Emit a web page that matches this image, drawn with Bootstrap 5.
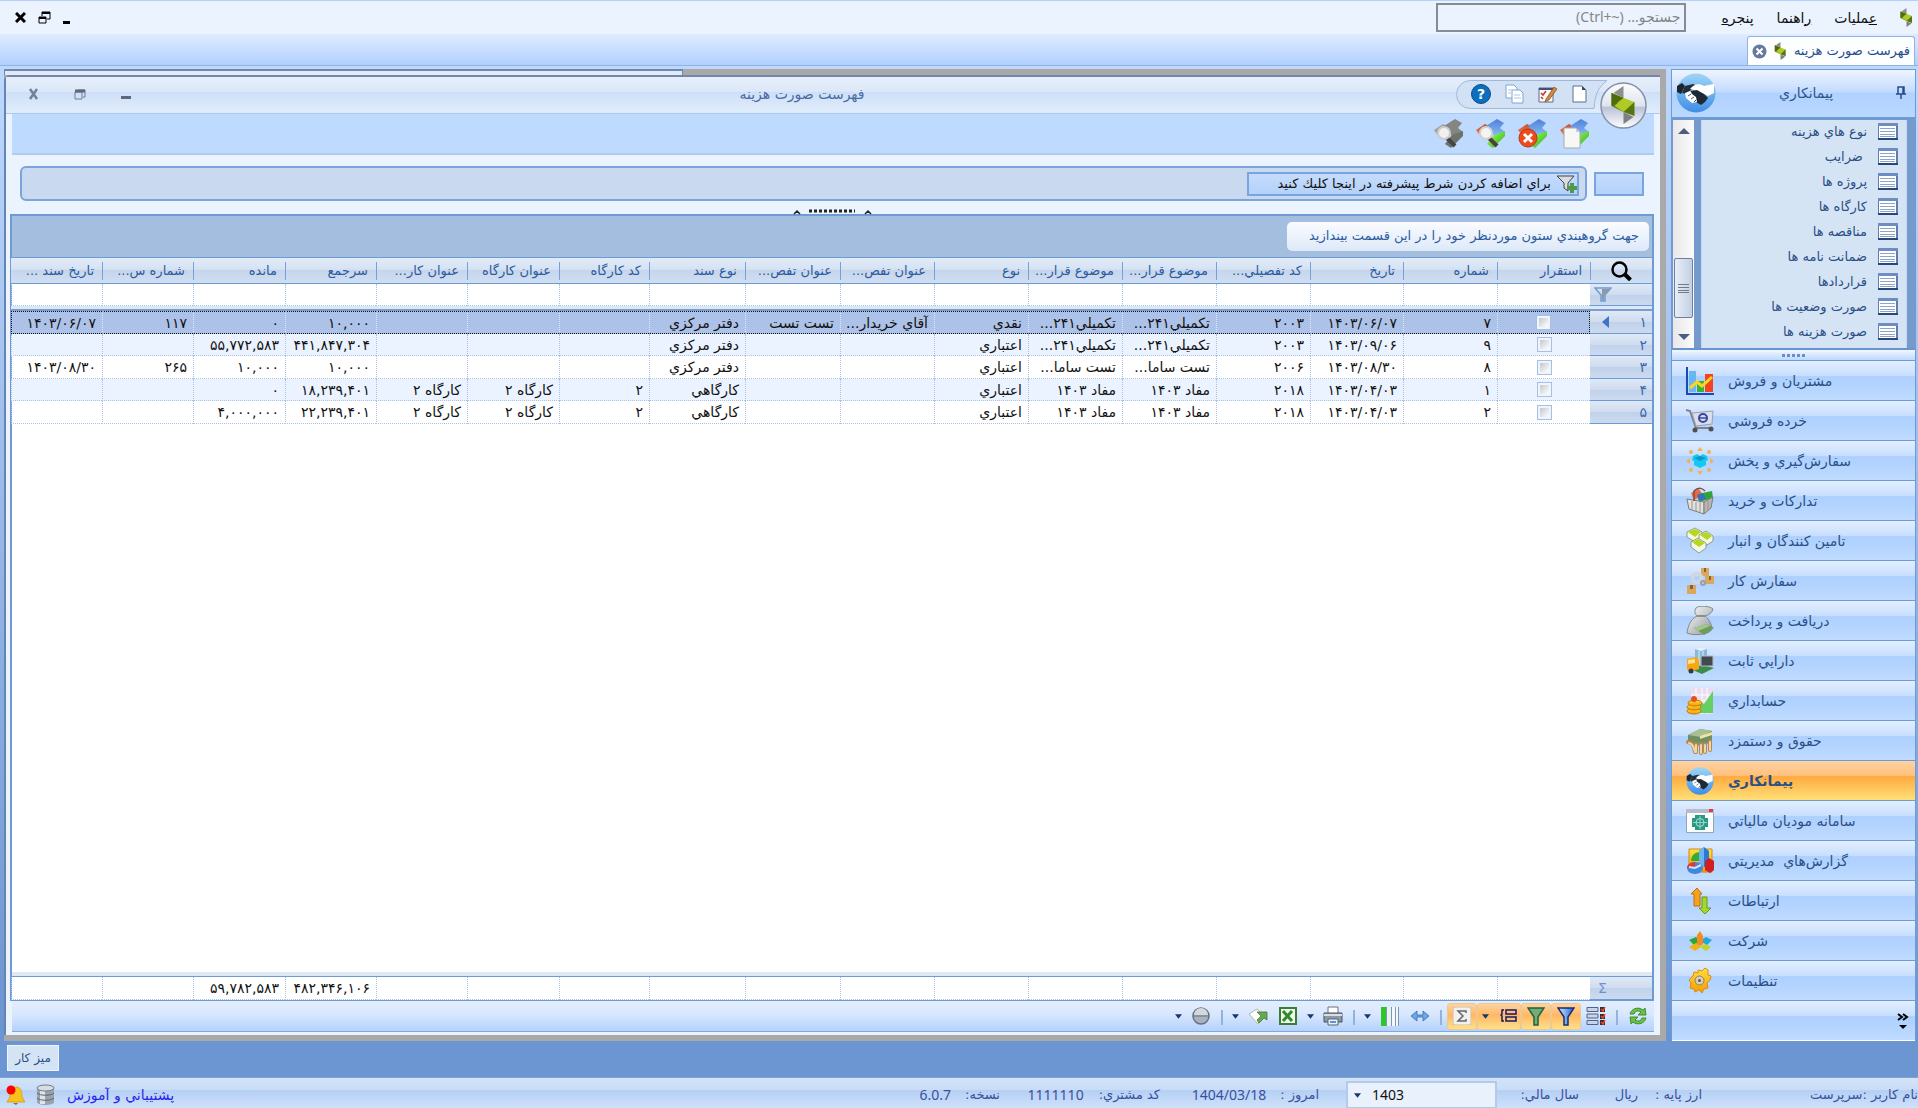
<!DOCTYPE html>
<html lang="fa" dir="rtl">
<head>
<meta charset="utf-8">
<meta name="viewport" content="width=device-width, initial-scale=1">
<title>فهرست صورت هزينه</title>
<link href="https://cdn.jsdelivr.net/npm/bootstrap@5.3.0/dist/css/bootstrap.min.css" rel="stylesheet">
<style>
:root{--line:#6f9bd5;--ink:#2b5596;--soft:#ebf3ff}
html,body{height:100%}
body{font-family:"DejaVu Sans","Noto Sans",sans-serif;font-size:13px;line-height:18px;color:var(--ink);background:linear-gradient(#bfd8fd 60px,#6b95d0 1040px);overflow:hidden}
button{font:inherit;color:inherit;background:none;border:0;padding:0}
svg{display:block;flex:none}
.menubar{height:34px;background:var(--soft);border-top:1px solid #b4d0fb;color:#111;padding:0 2px 0 15px}
.menubar a{color:#111;text-decoration:none;font-size:14px}
.menus{gap:23px;padding-right:3px}
.find-box{width:250px;height:29px;border:2px solid #868b94;background:var(--soft);border-radius:0;padding:0 4px 3px;font-size:14px;color:#777;font-family:"Noto Sans","DejaVu Sans",sans-serif;margin-right:12px}
.find-box::placeholder{color:#868686;opacity:1}
.winctl{gap:12px}
.tabstrip{height:32px;background:linear-gradient(#dfecff,#b1d0ff);border-bottom:1px solid #93b2de;padding:2px 3px 0}
.doc-tab{background:#fdfeff;border:1px solid #93b2de;border-bottom:0;border-radius:3px 3px 0 0;padding:0 4px;height:29px;color:#274c8c;width:168px}
.workspace{padding:3px 2px 0 4px;gap:5px;min-height:0}
.frame{background:#a9a9a9;padding:0 6px 6px 0;min-width:0;min-height:0}
.back-win{height:6px;width:41%;background:#e2e9f7;border-top:2px solid #6e88b4;border-left:1px solid #6e88b4;border-right:1px solid #6e88b4}
.mdi{background:var(--soft);border-left:2px solid #6584b3;border-top:2px solid #7186aa;border-radius:6px 0 0 0;min-height:0;position:relative}
.titlebar{height:37px;background:linear-gradient(#e6eefa 0,#dce8f8 40%,#cddff7 42%,#e1edfc 100%);border-bottom:1px solid #a9c8f3;padding:0 52px 2px 0;font-size:14px;color:#4a6ba3}
.quick{width:152px;height:29px;gap:14px;padding:0 20px 0 0;position:relative}
.quick button{position:relative}
.quick-shape{position:absolute;left:0;top:0}
.caption-ctl{gap:34px;width:142px;padding-left:22px;justify-content:flex-end}
.orb{position:absolute;right:13px;top:5px;z-index:2}
.actions{height:41px;background:#bedaff;border-bottom:2px solid #afcbf0;margin:0 6px;padding-right:64px;gap:12px}
.criteria{padding:11px 16px 0 14px;height:59px;gap:7px}
.crit-blank{width:50px;height:24px;border:2px solid #7aa4de;background:linear-gradient(#c5dcfd,#b4d2fb);margin-top:6px}
.crit-bar{height:35px;border:2px solid #7ba4db;border-radius:6px;background:#c9d9ef;padding-right:6px;min-width:0}
.crit-add{height:24px;width:332px;border:2px solid #7aa4de;background:linear-gradient(#c5dcfd,#b4d2fb);color:#111;gap:6px;padding:0}
.gridbox{margin:0 6px 0 4px;border:2px solid var(--line);border-bottom:0;background:#fff;min-height:0;position:relative}
.grip{position:absolute;top:-8px;left:50%;margin-left:-40px}
.groupby{height:41px;background:#a4bedf;padding:6px 3px 0}
.hint{height:29px;width:362px;background:linear-gradient(#fafcff,#dde9f8);border-radius:5px;padding:5px 10px 0;color:#2d5b9f}
.sheet{width:100%;table-layout:fixed;border-collapse:separate;border-spacing:0;color:#111;font-size:14px}
.sheet th,.sheet td{padding:0 6px 0 2px;white-space:nowrap;overflow:hidden;font-weight:400;text-align:right;line-height:18px}
.sheet thead th{height:27px;border-top:1px solid var(--line);border-bottom:1px solid var(--line);color:#2d5b9f;font-size:13px;padding-right:8px;background:linear-gradient(#78a0dc,#78a0dc) left center/1px 18px no-repeat,linear-gradient(#e2ebf8 0,#d6e2f3 45%,#c5d6ec 50%,#d0def2 100%)}
.sheet thead th:last-child{background:linear-gradient(#e2ebf8 0,#d6e2f3 45%,#c5d6ec 50%,#d0def2 100%)}
.sheet td{border-left:1px dotted #a9c2e6;border-bottom:1px dotted #a9c2e6;height:22px}
.sheet tr.tall td,.sheet tr.tall th{height:23px}
.sheet tr.gap-row td{height:5px;border:0;border-bottom:2px solid #7a9ccf;background:#dde8f7;padding:0;line-height:1px}
.sheet .rowhead{background:linear-gradient(#dfe9f7 0,#cfdcef 50%,#c0d2ea 52%,#cbdaf0 100%);border-bottom:1px solid var(--line);color:#3a68ad;padding:0 5px 0 4px}
.sheet .sum-mark{text-align:left;color:#6f93c8;padding-left:8px}
.sheet tr.alt td{background:#eaf3ff}
.sheet tr.picked td{background:#adc2e8;border-bottom:1px dotted #111;border-top:1px dotted #111;border-left-color:#dfe8f7}
.sheet tr.picked td:nth-child(2){border-right:1px dotted #111}
.sheet tr.picked td:last-child{border-left:1px dotted #111}
.sheet .tick{padding:0}
.sheet .lens{padding:0 0 0 21px}
.tick input{appearance:none;width:15px;height:15px;border:1px solid #a6c0e5;background:linear-gradient(135deg,#c3c8cf,#fff) content-box,#f1f5fb;padding:2px;display:block;margin:0 auto}
.totals{border-top:1px solid var(--line);box-shadow:0 -4px 0 #dfe8f5;border-bottom:1px solid var(--line)}
.gridbar{height:31px;margin:0 6px 3px;background:linear-gradient(#e3eeff 0,#d8e7fe 45%,#b4d2fc 100%);border-bottom:1px solid #7fa8de;padding:0 1px 0 0}
.gridbar button{height:27px;display:flex;align-items:center;justify-content:center}
.t-btn{width:30px}.t-wide{width:44px;gap:11px}.t-drop{width:15px}
.t-on{background:linear-gradient(#ffd3a0,#ffb765 45%,#ffe08a);border:1px solid #efc98c;border-radius:3px}
.t-sep{width:12px}
.t-sep::before{content:"";display:block;width:2px;height:15px;margin:2px auto 0;background:#93b2dd}
.side{width:245px;border:1px solid var(--line);border-bottom:0;min-height:0;background:#fff;flex:none}
.side-head{height:50px;background:linear-gradient(#eef5ff,#c5dcff 45%,#b1d2ff 50%,#b9d8ff);padding:0 9px 2px 4px;font-size:14px;border-bottom:3px solid var(--line);color:#2f5590}
.side-list{height:230px;background:#769acb;padding:0 8px 0 1px;overflow:hidden;border-bottom:2px solid #6a94d0}
.links{background:#d5e4f4;border-left:1px solid #c0d8fa;border-right:1px solid #c0d8fa;margin-left:7px;padding:0;list-style:none;min-width:0}
.links a{display:flex;align-items:center;gap:11px;height:25px;padding-right:8px;color:#2b4f86;text-decoration:none}
.links li:first-child{margin-top:-1px}
.scroller{width:21px;background:linear-gradient(90deg,#e8e8ea,#fbfbfb)}
.thumb{width:19px;height:60px;border:1px solid #6c7ea9;border-radius:2px;background:linear-gradient(90deg,#e8eef7,#c3d0e2)}
.splitter{height:10px;background:linear-gradient(#f2f8ff,#bdd8ff);color:#5d88c9}
.mod{height:40px;width:100%;border-top:1px solid var(--line)!important;background:linear-gradient(#e2eeff 0,#c9dfff 37%,#add0ff 40%,#bfdbff 100%)!important;gap:14px;padding:0 14px;color:#2b4f86!important;font-size:14px;justify-content:flex-end}
.mod.sel{background:linear-gradient(#ffd3a2 0,#ffc07d 37%,#ffab3f 40%,#ffdf77 100%)!important;font-weight:700}
.mod.more{padding:0 6px;justify-content:flex-start}
.deskbar{height:36px;background:#6c96d1;padding:0 0 2px 7px}
.desk{width:52px;height:26px;background:#d5e4f4;border:1px solid #eef5ff;color:#2b4f86;font-size:12px}
.status{height:31px;background:linear-gradient(#d3e3f9 0,#c9ddf7 38%,#b5d0f4 42%,#cfe1fa 100%);border-top:1px solid #7ea2d4;padding-top:4px;color:#3a4f9f;white-space:nowrap}
.lat{font-family:"Noto Sans",sans-serif;font-size:14px;direction:ltr}
.s-user{width:216px}.s-cur{width:123px;gap:17px}.s-year{width:82px}.s-day{width:186px;padding-right:27px;gap:14px}.s-cust{width:160px;gap:15px}.s-ver{gap:14px}
.year-pick{width:151px;height:28px;direction:ltr;border:2px solid #b4cae9;background:#e9f1fd;border-radius:0;padding:0 0 0 24px;appearance:none;color:#111;font-family:"Noto Sans",sans-serif;font-size:14px}
.year-wrap{position:relative}
.year-wrap svg{position:absolute;left:8px;top:12px;pointer-events:none}
.help-link{color:#2a1ff0;text-decoration:none;font-size:14px}
.trays{gap:11px;padding:0 12px 0 6px}
</style>
<script src="https://cdn.jsdelivr.net/npm/bootstrap@5.3.0/dist/js/bootstrap.bundle.min.js"></script>
</head>
<body class="d-flex flex-column">
<svg width="0" height="0" class="position-absolute" aria-hidden="true"><defs>
<linearGradient id="gOrb" x1="0" y1="0" x2="0" y2="1"><stop offset="0" stop-color="#fdfdff"/><stop offset=".5" stop-color="#dfe4ee"/><stop offset=".55" stop-color="#b9c3d8"/><stop offset="1" stop-color="#fff"/></linearGradient>
<linearGradient id="gBall" x1="0" y1="0" x2="0" y2="1"><stop offset="0" stop-color="#9fd6f6"/><stop offset="1" stop-color="#3f8de6"/></linearGradient>
<linearGradient id="gStone" x1="0" y1="0" x2="1" y2="1"><stop offset="0" stop-color="#fff"/><stop offset="1" stop-color="#8f9499"/></linearGradient>
<linearGradient id="gBlue" x1="0" y1="0" x2="1" y2="0"><stop offset="0" stop-color="#d8ecff"/><stop offset="1" stop-color="#1e63d8"/></linearGradient>
<linearGradient id="gGold" x1="0" y1="0" x2="0" y2="1"><stop offset="0" stop-color="#ffe23e"/><stop offset="1" stop-color="#f59a00"/></linearGradient>
<linearGradient id="gLime" x1="0" y1="0" x2="1" y2="1"><stop offset="0" stop-color="#b8ff5a"/><stop offset="1" stop-color="#1eb01e"/></linearGradient>
<linearGradient id="gSky" x1="0" y1="0" x2="0" y2="1"><stop offset="0" stop-color="#4f7fd8"/><stop offset="1" stop-color="#86bdf6"/></linearGradient>
<linearGradient id="gRed" x1="0" y1="0" x2="0" y2="1"><stop offset="0" stop-color="#c9502f"/><stop offset="1" stop-color="#f59470"/></linearGradient>
<symbol id="logo" viewBox="0 0 24 38"><path d="M12 0v12L2 7z" fill="#8d8f8c"/><path d="M0 7v13l12 6V12z" fill="#5b7a0f"/><path d="M0 7l23 10-11 9z" fill="#86a81c"/><path d="M0 7v13l12-8z" fill="#4f6c0d"/><path d="M12 12l11 4-11 10-9-6z" fill="#aecb28"/><path d="M23 16v14l-11-4z" fill="#57750f"/><path d="M12 26l10 5-10 7z" fill="#7f8180"/></symbol>
<symbol id="form" viewBox="0 0 20 18"><path d="M0 0h20v17H0z" fill="#5f7cae"/><path d="M1 3h17v12H1z" fill="#fff"/><path d="M0 0h20v3H0z" fill="#6f8cc4"/><path d="M2 5.500h15M2 8.500h15M2 11.500h15M2 13.500h15" stroke="#8ea5cb"/><path d="M0 16h20" stroke="#28487c" stroke-width="2"/></symbol>
<symbol id="hands" viewBox="0 0 40 40"><circle cx="20" cy="20" r="19.500" fill="url(#gBall)"/><path d="M1 13l5-3 3 3-4 8-4-2z" fill="#1e252e"/><path d="M9 13l8-2 4 2-6 4-4 4-5-1z" fill="#262e38"/><path d="M14 16c4-5 9-6 14-3l4-1 6-1v9l-6 3-4-2-10-4z" fill="#fff"/><path d="M15 18l6-1 7 4 4 4-3 4-4 3-5-3-4-5z" fill="#1f2833"/><path d="M9 20l5-2 2 3 4 3 1 5-5 1-6-5z" fill="#fff"/><path d="M12 23l3-2M15 26l3-2M18 29l2-2" stroke="#4a5a70"/></symbol>
<symbol id="gem" viewBox="0 0 30 30"><path d="M0 11l9-6 8 4-4 12-8-3z" fill="url(#gRed)"/><path d="M10 7l11-7 7 4-4 5 5 4-11 4z" fill="url(#gSky)"/><path d="M29 12v5L17 29l-6-4 7-9z" fill="url(#gLime)"/></symbol>
<symbol id="gemg" viewBox="0 0 30 30"><path d="M0 11l9-6 8 4-4 12-8-3z" fill="#a2a29f"/><path d="M10 7l11-7 7 4-4 5 5 4-11 4z" fill="#858583"/><path d="M29 12v5L17 29l-6-4 7-9z" fill="#6e726a"/></symbol>
<symbol id="drop" viewBox="0 0 8 5"><path d="M0 0h8L4 5z" fill="#17386f"/></symbol>
</defs></svg>

<header class="menubar d-flex align-items-center justify-content-between">
 <div class="d-flex align-items-center menus">
  <svg width="13" height="19"><use href="#logo"/></svg>
  <a href="#"><u>ع</u>مليات</a><a href="#"><u>ر</u>اهنما</a><a href="#">پنجر<u>ه</u></a>
  <input class="find-box" type="text" aria-label="جستجو" placeholder="جستجو... &lrm;(Ctrl+~)&lrm;">
 </div>
 <div class="d-flex align-items-center winctl">
  <button aria-label="کوچک کردن"><svg width="8" height="12"><path d="M0 9h7v3H0z"/></svg></button>
  <button aria-label="بازگرداندن"><svg width="13" height="13" fill="none" stroke="#000"><path d="M4 5V1h8v7H9M1 6h7v6H1z"/><path d="M4 2h8M1 7h7" stroke-width="2"/></svg></button>
  <button aria-label="بستن"><svg width="11" height="11" stroke="#000" stroke-width="3"><path d="M1 1l9 9M10 1l-9 9"/></svg></button>
 </div>
</header>
<div class="tabstrip d-flex">
 <div class="doc-tab d-flex align-items-center justify-content-between"><span>فهرست صورت هزينه</span>
  <svg width="13" height="18"><use href="#logo"/></svg>
  <button aria-label="بستن زبانه"><svg width="15" height="15"><circle cx="7.500" cy="7.500" r="7" fill="#66799e"/><path d="M4.500 4.500l6 6M10.500 4.500l-6 6" stroke="#fff" stroke-width="2"/></svg></button>
 </div>
</div>

<main class="workspace d-flex flex-fill">
 <aside class="side d-flex flex-column">
  <div class="side-head d-flex align-items-center justify-content-between">
   <svg width="10" height="13" fill="none" stroke="#274c8c" stroke-width="1.500"><path d="M2 8V1h6v7M0 8h10M5 8v5M7 1v7"/></svg><span>پيمانكاري</span><svg width="40" height="40"><use href="#hands"/></svg>
  </div>
  <div class="side-list d-flex">
   <ul class="links flex-fill mb-0">
    <li><a href="#"><svg width="20" height="18"><use href="#form"/></svg>نوع هاي هزينه</a></li>
    <li><a href="#"><svg width="20" height="18"><use href="#form"/></svg>&nbsp;ضرايب</a></li>
    <li><a href="#"><svg width="20" height="18"><use href="#form"/></svg>پروژه ها</a></li>
    <li><a href="#"><svg width="20" height="18"><use href="#form"/></svg>كارگاه ها</a></li>
    <li><a href="#"><svg width="20" height="18"><use href="#form"/></svg>مناقصه ها</a></li>
    <li><a href="#"><svg width="20" height="18"><use href="#form"/></svg>ضمانت نامه ها</a></li>
    <li><a href="#"><svg width="20" height="18"><use href="#form"/></svg>قراردادها</a></li>
    <li><a href="#"><svg width="20" height="18"><use href="#form"/></svg>صورت وضعيت ها</a></li>
    <li><a href="#"><svg width="20" height="18"><use href="#form"/></svg>صورت هزينه ها</a></li>
    <li><a href="#" aria-label="مورد بعدي"><svg width="20" height="18"><use href="#form"/></svg></a></li>
   </ul>
   <div class="scroller d-flex flex-column align-items-center justify-content-between pt-2 pb-2">
    <svg width="12" height="6"><path d="M0 6h12L6 0z" fill="#4d5c80"/></svg>
    <div class="d-flex flex-column align-items-center gap-3 mt-auto"><div class="thumb d-flex align-items-center justify-content-center"><svg width="11" height="9" stroke="#737a84"><path d="M0 .5h11M0 3.500h11M0 6.500h11M0 8.500h11"/></svg></div>
    <svg width="12" height="6"><path d="M0 0h12L6 6z" fill="#4d5c80"/></svg></div>
   </div>
  </div>
  <div class="splitter d-flex align-items-center justify-content-center"><svg width="24" height="3" fill="#6a8fc8"><path d="M0 0h3v3H0zM5 0h3v3H5zM10 0h3v3h-3zM15 0h3v3h-3zM20 0h3v3h-3z"/></svg></div>

  <button class="mod d-flex align-items-center"><span>مشتريان و فروش</span><svg width="28" height="28"><path d="M3 4h7v21H3z" fill="#69b6f5"/><path d="M11 14h7v11h-7z" fill="#35b43a"/><path d="M19 7h8v18h-8z" fill="#f2451f"/><path d="M1 0v27h27" fill="none" stroke="#1b48b4" stroke-width="2"/><path d="M4 21l7-6 5 4 10-9" fill="none" stroke="#ffd420" stroke-width="3"/></svg></button>
  <button class="mod d-flex align-items-center"><span>خرده فروشي</span><svg width="28" height="28"><path d="M0 3l4 1 6 17h16" fill="none" stroke="#7e828c" stroke-width="2"/><path d="M6 6l21-2-1 13-16 2z" fill="#d9dee9" stroke="#9aa0ae"/><circle cx="17" cy="11" r="4" fill="none" stroke="#3748a4" stroke-width="2"/><path d="M14 11h6" stroke="#3748a4" stroke-width="1.500"/><circle cx="9" cy="23" r="2.500" fill="#554f4c"/><circle cx="25" cy="22" r="2.500" fill="#554f4c"/></svg></button>
  <button class="mod d-flex align-items-center"><span>سفارش‌گيري و پخش</span><svg width="28" height="28"><path d="M7 9l4-2 3 2 3-2 4 2 1 4-2 1v4l-6 3-6-3v-4l-2-1z" fill="#13c9ee"/><path d="M8 11l6 3 6-3-6-2z" fill="#0c95d0"/><g fill="#efb457"><path d="M14 0l3 4h-6zM14 28l3-4h-6zM0 14l4-3v6zM28 14l-4-3v6z"/><circle cx="5" cy="5" r="2"/><circle cx="23" cy="5" r="2"/><circle cx="5" cy="23" r="2"/><circle cx="23" cy="23" r="2"/></g></svg></button>
  <button class="mod d-flex align-items-center"><span>تداركات و خريد</span><svg width="28" height="28"><path d="M5 6l8-4 4 6-9 5z" fill="#e36b45"/><path d="M12 7l14-3 1 7-14 4z" fill="#2fa33c"/><path d="M11 8l6-2 3 6-7 2z" fill="#3b6fb8"/><path d="M1 12l17 3v12L3 22z" fill="#e1e1de" stroke="#7f7c76"/><path d="M18 15l9-5-2 11-7 6z" fill="#b9b6b1" stroke="#7f7c76"/><path d="M6 14v8M10 15v9M14 15v10M22 14v9" stroke="#98958e"/><path d="M8 14V4c5-5 9-2 11 0" fill="none" stroke="#8b4a3f" stroke-width="1.500"/></svg></button>
  <button class="mod d-flex align-items-center"><span>تامين كنندگان و انبار</span><svg width="28" height="28"><g stroke="#7f8b66" stroke-width=".8"><path d="M1 5l8-4 7 4v5l-7 5-8-5z" fill="#f4f7e8"/><path d="M13 8l7-4 7 5v5l-6 4-8-5z" fill="#f4f7e8"/><path d="M5 15l7-4 8 5v5l-7 5-8-6z" fill="#f4f7e8"/></g><path d="M2 5l7-3 6 3-6 5zM14 8l6-3 6 4-5 4zM6 15l6-3 7 4-6 4z" fill="#b6d81c"/></svg></button>
  <button class="mod d-flex align-items-center"><span>سفارش كار</span><svg width="28" height="28"><path d="M15 1h8v8h-8zM19 9h9v8h-9zM1 18h9v9H1z" fill="#dba75c"/><path d="M18 1h2v4h-2zM23 9h2v4h-2zM4 18h3v4H4z" fill="#8b6236"/><circle cx="11" cy="11" r="4.500" fill="none" stroke="#d3d6da" stroke-width="3.500"/><circle cx="17" cy="16" r="2" fill="none" stroke="#9aa0a8" stroke-width="2"/></svg></button>
  <button class="mod d-flex align-items-center"><span>دريافت و پرداخت</span><svg width="28" height="30"><path d="M10 2c3-3 14-2 17 1-1 4-4 6-8 7 4 3 7 9 7 13-2 6-19 7-25 4 1-7 3-13 10-17-2-2-3-5-1-8z" fill="url(#gStone)" stroke="#85888c"/><path d="M11 10h8" stroke="#777" stroke-width="1.500"/><path d="M8 22l13-4 7 4-10 7z" fill="#6f9c56"/><path d="M8 22l13-4 3 2-12 5z" fill="#a3c48d"/></svg></button>
  <button class="mod d-flex align-items-center"><span>دارايي ثابت</span><svg width="28" height="28"><path d="M2 21l12-4 14 4-12 6z" fill="#3c8b4a"/><path d="M9 2h12v17H9z" fill="#88b9d8"/><path d="M9 2l6-1 6 1-6 2z" fill="#e6f3fb"/><path d="M13 4v14M17 4v14" stroke="#dceffa"/><path d="M15 9h12v10H15z" fill="#44494f" stroke="#b7bdc4"/><path d="M1 12l10-2 2 4v8L3 25l-2-3z" fill="#f5a716"/><path d="M2 13l7-1v4l-7 1z" fill="#ffe28a"/><circle cx="5" cy="24" r="2.500" fill="#3a3a3a"/></svg></button>
  <button class="mod d-flex align-items-center"><span>حسابداري</span><svg width="28" height="28"><path d="M5 1h22v26H5z" fill="#eaddf2"/><path d="M10 1v26M16 1v26M21 1v26M5 8h22M5 14h22" stroke="#fff"/><path d="M6 26l5-12 7 3 9-13v22z" fill="#66cf62"/><g fill="url(#gGold)" stroke="#c87a0a"><ellipse cx="8" cy="24" rx="7" ry="3"/><ellipse cx="8" cy="20" rx="7" ry="3"/><ellipse cx="9" cy="16" rx="7" ry="3"/></g><circle cx="8" cy="12" r="3" fill="#e8501e"/></svg></button>
  <button class="mod d-flex align-items-center"><span>حقوق و دستمزد</span><svg width="28" height="28"><path d="M2 8l12-6 12 2v11l-12 4L2 14z" fill="#6f8f62"/><path d="M2 8l12-6 12 2-11 6z" fill="#a9bf92"/><path d="M14 9l12-4v3l-12 4z" fill="#e9e6a8"/><path d="M2 15c5 1 6 4 7 10M10 17v8M15 17v9M19 17v8M24 14v9" stroke="#b58a52" stroke-width="4" fill="none" stroke-linecap="round"/><path d="M3 16c4 1 5 4 6 9M10 18v7M15 18v8M19 18v7M24 15v8" stroke="#f2d5a7" stroke-width="2" fill="none" stroke-linecap="round"/></svg></button>
  <button class="mod sel d-flex align-items-center"><span>پيمانكاري</span><svg width="28" height="28"><use href="#hands"/></svg></button>
  <button class="mod d-flex align-items-center"><span>سامانه موديان مالياتي</span><svg width="28" height="26"><path d="M.5 1.500h27v23H.5z" fill="#fcfdfd" stroke="#9aa3b2"/><path d="M0 1h28v4H0z" fill="#b7bdc8"/><path d="M23 1h4v3h-4z" fill="#d8423a"/><path d="M6 10h3V7h10v3h3v9h-3v3H9v-3H6z" fill="#2b9a85"/><circle cx="14" cy="14.500" r="4" fill="none" stroke="#a8e0d4"/><path d="M14 8v13M7 14.500h14" stroke="#a8e0d4" stroke-width=".8"/></svg></button>
  <button class="mod d-flex align-items-center"><span>گزارش‌هاي &nbsp;مديريتي</span><svg width="28" height="28"><path d="M3 2h23v23H3z" fill="url(#gGold)" stroke="#d08a12"/><path d="M5 14c0-6 5-9 9-9v9z" fill="#37a83a"/><path d="M13 4l5-4 5 4v16H13z" fill="#2b78dc"/><path d="M13 4l5-4v20h-5z" fill="#6cb2f4"/><path d="M19 14l4-3 5 3v9l-4 3-5-3z" fill="#cf1f23"/><ellipse cx="9" cy="21" rx="8" ry="6" fill="#3f86e0"/><path d="M9 21v-6c-5 0-8 3-8 6z" fill="#e13a33"/><path d="M3 20l6 1 6-3" stroke="#cfe4fb" fill="none" stroke-width="2"/></svg></button>
  <button class="mod d-flex align-items-center"><span>ارتباطات</span><svg width="28" height="28"><path d="M5 7l6-6 5 6h-2v12H8V7z" fill="#f3a21c" stroke="#bf6f0c"/><path d="M16 10h5v11h4l-6 6-6-6h3z" fill="#a5d62a" stroke="#6a9a14"/></svg></button>
  <button class="mod d-flex align-items-center"><span>شركت</span><svg width="28" height="28"><path d="M3 13l7-3 5 4-7 4z" fill="#28a838"/><path d="M14 14l6-4 6 3-5 5z" fill="#1fa8d8"/><path d="M3 20l7-4 5 4-6 4z" fill="#f2b21a"/><path d="M14 20l5-3 6 3-5 4z" fill="#c3d31f"/><path d="M11 8l3-4 3 5v8l-3 2-3-2z" fill="#f68a1a"/></svg></button>
  <button class="mod d-flex align-items-center"><span>تنظيمات</span><svg width="28" height="28"><path d="M12 3l4 1 3-3 3 2v5l3 1-1 4-3 3 1 5-4 1-2 4-3-3-4 2-1-3-4-1 1-5-2-3 4-4 1-4 4 1z" fill="url(#gGold)" stroke="#e08a10"/><circle cx="13.500" cy="13.500" r="4.500" fill="#d8cdb8" stroke="#8d7f63"/><circle cx="13.500" cy="13.500" r="1.500" fill="#5e5a50"/></svg></button>
  <button class="mod more d-flex align-items-center" aria-label="بيشتر"><svg width="12" height="18" fill="none" stroke="#000" stroke-width="2"><path d="M1 2l4 3-4 3M6 2l4 3-4 3"/><path d="M2 13h8l-4 4z" fill="#000" stroke="none"/></svg></button>
 </aside>

 <section class="frame d-flex flex-column flex-fill">
  <div class="back-win align-self-end"></div>
  <div class="mdi d-flex flex-column flex-fill">
   <svg class="orb" width="47" height="47"><circle cx="23.500" cy="23.500" r="22.500" fill="url(#gOrb)" stroke="#8490a8" stroke-width="1.500"/><svg x="11" y="4" width="25" height="38"><use href="#logo"/></svg></svg>
   <div class="titlebar d-flex align-items-center">
    <div class="quick d-flex align-items-center">
     <svg class="quick-shape" width="152" height="29"><path d="M14.500.5H151c-9 7-12 14-13 28H14.500a14 14 0 0 1 0-28z" fill="#d3e1f5" stroke="#9fb8dc"/></svg>
     <button aria-label="جديد"><svg width="16" height="18"><path d="M1 1h9l4 4v12H1z" fill="#fff" stroke="#5b6e8e"/><path d="M10 1v4h4z" fill="#34496c"/></svg></button>
     <button aria-label="ويرايش"><svg width="20" height="18"><path d="M1 3h14v14H1z" fill="#fdfdfd" stroke="#5a6b86"/><path d="M1 3h14v2H1z" fill="#3f5277"/><path d="M3 8l2 2 3-4M3 12l2 2" stroke="#c33" fill="none" stroke-width="1.500"/><path d="M8 14l8-12 3 2-8 11-4 2z" fill="#d08a3a" stroke="#7d4a1c" stroke-width=".7"/></svg></button>
     <button aria-label="رونوشت"><svg width="19" height="20"><path d="M1 1h8l3 3v10H1z" fill="#fff" stroke="#7da6d6"/><path d="M7 6h8l3 3v10H7z" fill="#fff" stroke="#7da6d6"/><path d="M3 6h4M3 9h3M9 11h6M9 14h7" stroke="#a9c6ea"/></svg></button>
     <button aria-label="راهنما"><svg width="20" height="20"><circle cx="10" cy="10" r="9.500" fill="#0c6fbd" stroke="#0b4c8c"/><text x="10" y="15" text-anchor="middle" font-size="14" font-weight="700" fill="#fff" font-family="DejaVu Sans">?</text></svg></button>
    </div>
    <div class="flex-fill text-center">فهرست صورت هزينه</div>
    <div class="caption-ctl d-flex align-items-center">
     <button aria-label="کوچک کردن پنجره"><svg width="11" height="12"><path d="M0 8h10v3H0z" fill="#5f6876"/></svg></button>
     <button aria-label="بازگرداندن پنجره"><svg width="13" height="13" fill="none" stroke="#6d7d98"><path d="M4 3V2h7v7H9M1 4h7v7H1z"/><path d="M1 3h10" stroke-width="3" stroke="#5f6876"/></svg></button>
     <button aria-label="بستن پنجره"><svg width="12" height="12" stroke="#70809d" stroke-width="2.500"><path d="M2 1l7 10M9 1L2 11"/></svg></button>
    </div>
   </div>
   <div class="actions d-flex align-items-center">
    <button aria-label="فيلتر جديد"><svg width="30" height="30"><use href="#gem" width="30" height="30"/><path d="M4 9h12l4 4v16H4z" fill="#f7f7f5" stroke="#aaa"/><path d="M16 9v4h4z" fill="#ccc"/></svg></button>
    <button aria-label="حذف فيلتر"><svg width="30" height="30"><use href="#gem" width="30" height="30"/><circle cx="10" cy="19" r="9" fill="#ee4a1b" stroke="#b63a14"/><path d="M6 15l8 8M14 15l-8 8" stroke="#fff" stroke-width="3"/></svg></button>
    <button aria-label="جستجوي فيلتر"><svg width="30" height="30"><use href="#gem" width="30" height="30"/><path d="M13 19l8 8" stroke="#4c423c" stroke-width="4"/><circle cx="10" cy="14" r="6" fill="#f4f4f4" stroke="#d2d2d2" stroke-width="2"/></svg></button>
    <button aria-label="جستجو غيرفعال"><svg width="30" height="30"><use href="#gemg" width="30" height="30"/><path d="M13 19l8 8" stroke="#454545" stroke-width="4"/><circle cx="10" cy="14" r="6" fill="#f0f0f0" stroke="#ccc" stroke-width="2"/></svg></button>
   </div>
   <div class="criteria d-flex align-items-start">
    <button class="crit-blank" aria-label="شرط"></button>
    <div class="crit-bar d-flex align-items-center flex-fill"><button class="crit-add d-flex align-items-center"><svg width="20" height="18"><path d="M0 1h17l-6 7v8l-4-3V8z" fill="#d9dce0" stroke="#444"/><path d="M13 8h4v3h3v4h-3v3h-4v-3h-3v-4h3z" fill="#4f9a4b"/></svg><span>براي اضافه كردن شرط پيشرفته در اينجا كليك كنيد</span></button></div>
   </div>
   <div class="gridbox d-flex flex-column flex-fill">
    <svg class="grip" width="80" height="7" fill="none" stroke="#222"><path d="M2 6l3-3 3 3M73 6l3-3 3 3" stroke-width="1.500"/><path d="M17 3h46" stroke-width="3" stroke-dasharray="3 2"/></svg>
    <div class="groupby"><div class="hint">جهت گروهبندي ستون موردنظر خود را در اين قسمت بيندازيد</div></div>
    <table class="sheet">
     <colgroup><col style="width:62px"><col style="width:93px"><col style="width:94px"><col style="width:93px"><col style="width:94px"><col style="width:94px"><col style="width:94px"><col style="width:94px"><col style="width:94px"><col style="width:95px"><col style="width:96px"><col style="width:90px"><col style="width:92px"><col style="width:91px"><col style="width:91px"><col style="width:92px"><col style="width:91px"><col style="width:91px"></colgroup>
     <thead><tr><th class="lens" aria-label="جستجو"><svg class="me-auto" width="22" height="20" fill="none" stroke="#000"><circle cx="8.500" cy="8.500" r="7" stroke-width="2.500"/><path d="M13.500 13l6 6" stroke-width="4"/></svg></th><th>استقرار</th><th>شماره</th><th>تاريخ</th><th>كد تفصيلي...</th><th>موضوع قرار...</th><th>موضوع قرار...</th><th>نوع</th><th>عنوان تفص...</th><th>عنوان تفص...</th><th>نوع سند</th><th>كد كارگاه</th><th>عنوان كارگاه</th><th>عنوان كار...</th><th>سرجمع</th><th>مانده</th><th>شماره س...</th><th>تاريخ سند ...</th></tr></thead>
     <tbody>
      <tr><th class="rowhead"><div class="d-flex justify-content-end"><svg width="18" height="15"><path d="M1 1h16l-6 7v6H7V8z" fill="none" stroke="#6f9bd5" stroke-width="1.500"/><path d="M8 2h8l-6 6v5H8z" fill="#8f979f"/></svg></div></th><td></td><td></td><td></td><td></td><td></td><td></td><td></td><td></td><td></td><td></td><td></td><td></td><td></td><td></td><td></td><td></td><td></td></tr>
      <tr class="gap-row"><td colspan="18"></td></tr>
      <tr class="tall picked"><th class="rowhead"><div class="d-flex align-items-center justify-content-between">۱<svg class="ms-2" width="7" height="12"><path d="M7 0v12L0 6z" fill="#3f74c4"/></svg></div></th><td class="tick"><input type="checkbox" aria-label="استقرار ۱"></td><td>۷</td><td>۱۴۰۳/۰۶/۰۷</td><td>۲۰۰۳</td><td>تكميلي۲۴۱...</td><td>تكميلي۲۴۱...</td><td>نقدي</td><td>آقاي خريدار...</td><td>تست تست</td><td>دفتر مركزي</td><td></td><td></td><td></td><td>۱۰,۰۰۰</td><td>۰</td><td>۱۱۷</td><td>۱۴۰۳/۰۶/۰۷</td></tr>
      <tr class="alt"><th class="rowhead">۲</th><td class="tick"><input type="checkbox" aria-label="استقرار ۲"></td><td>۹</td><td>۱۴۰۳/۰۹/۰۶</td><td>۲۰۰۳</td><td>تكميلي۲۴۱...</td><td>تكميلي۲۴۱...</td><td>اعتباري</td><td></td><td></td><td>دفتر مركزي</td><td></td><td></td><td></td><td>۴۴۱,۸۴۷,۳۰۴</td><td>۵۵,۷۷۲,۵۸۳</td><td></td><td></td></tr>
      <tr class="tall"><th class="rowhead">۳</th><td class="tick"><input type="checkbox" aria-label="استقرار ۳"></td><td>۸</td><td>۱۴۰۳/۰۸/۳۰</td><td>۲۰۰۶</td><td>تست ساما...</td><td>تست ساما...</td><td>اعتباري</td><td></td><td></td><td>دفتر مركزي</td><td></td><td></td><td></td><td>۱۰,۰۰۰</td><td>۱۰,۰۰۰</td><td>۲۶۵</td><td>۱۴۰۳/۰۸/۳۰</td></tr>
      <tr class="alt"><th class="rowhead">۴</th><td class="tick"><input type="checkbox" aria-label="استقرار ۴"></td><td>۱</td><td>۱۴۰۳/۰۴/۰۳</td><td>۲۰۱۸</td><td>مفاد ۱۴۰۳</td><td>مفاد ۱۴۰۳</td><td>اعتباري</td><td></td><td></td><td>كارگاهي</td><td>۲</td><td>كارگاه ۲</td><td>كارگاه ۲</td><td>۱۸,۲۳۹,۴۰۱</td><td>۰</td><td></td><td></td></tr>
      <tr class="tall"><th class="rowhead">۵</th><td class="tick"><input type="checkbox" aria-label="استقرار ۵"></td><td>۲</td><td>۱۴۰۳/۰۴/۰۳</td><td>۲۰۱۸</td><td>مفاد ۱۴۰۳</td><td>مفاد ۱۴۰۳</td><td>اعتباري</td><td></td><td></td><td>كارگاهي</td><td>۲</td><td>كارگاه ۲</td><td>كارگاه ۲</td><td>۲۲,۲۳۹,۴۰۱</td><td>۴,۰۰۰,۰۰۰</td><td></td><td></td></tr>
     </tbody>
    </table>
    <div class="totals mt-auto"><table class="sheet">
     <colgroup><col style="width:62px"><col style="width:93px"><col style="width:94px"><col style="width:93px"><col style="width:94px"><col style="width:94px"><col style="width:94px"><col style="width:94px"><col style="width:94px"><col style="width:95px"><col style="width:96px"><col style="width:90px"><col style="width:92px"><col style="width:91px"><col style="width:91px"><col style="width:92px"><col style="width:91px"><col style="width:91px"></colgroup>
     <tbody><tr class="tall"><th class="rowhead sum-mark">Σ</th><td></td><td></td><td></td><td></td><td></td><td></td><td></td><td></td><td></td><td></td><td></td><td></td><td></td><td>۴۸۲,۳۴۶,۱۰۶</td><td>۵۹,۷۸۲,۵۸۳</td><td></td><td></td></tr></tbody>
    </table></div>
   </div>
   <div class="gridbar d-flex align-items-center">
    <button class="t-btn" aria-label="بازخواني"><svg width="20" height="20"><path d="M2 8c1-5 8-8 13-4l2-2 1 7h-8l3-3c-3-2-6-1-7 2z" fill="#6cc04a" stroke="#3f8f2c"/><path d="M18 12c-1 5-8 8-13 4l-2 2-1-7h8l-3 3c3 2 6 1 7-2z" fill="#6cc04a" stroke="#3f8f2c"/></svg></button>
    <span class="t-sep"></span>
    <button class="t-btn" aria-label="ستون‌ها"><svg width="20" height="20"><path d="M1 1.500h11v4H1zM1 8h11v4H1zM1 14.500h11v4H1z" fill="#c9d4e6" stroke="#4f638c"/><path d="M14 1h5v5h-5zM14 8h5v5h-5zM14 14h5v5h-5z" fill="#332b33"/><path d="M15 3l2 2 2-4M15 10l2 2 2-4M15 16l2 2 2-4" stroke="#f04a2a" fill="none" stroke-width="1.500"/></svg></button>
    <button class="t-btn t-on" aria-label="فيلتر"><svg width="18" height="19"><path d="M1 1h16l-6 9v8H7v-8z" fill="url(#gBlue)" stroke="#15306e" stroke-width="1.500"/></svg></button>
    <button class="t-btn t-on" aria-label="فيلتر سطر"><svg width="18" height="19"><path d="M1 1h16l-6 9v8H7v-8z" fill="#6fae7b" stroke="#22633a" stroke-width="1.500"/></svg></button>
    <button class="t-wide t-on" aria-label="گروه‌بندي"><svg width="17" height="14" fill="none" stroke="#17176b" stroke-width="1.500"><path d="M6 1h10v4H6zM6 8h10v4H6zM4 1H2v4L1 6l1 1v5h2"/></svg><svg width="7" height="5"><use href="#drop"/></svg></button>
    <button class="t-btn t-on" aria-label="جمع"><svg width="18" height="18"><rect width="18" height="18" rx="2" fill="#f1f1f1" stroke="#bbb"/><path d="M13 6V4H5l5 5-5 5h8v-2" fill="none" stroke="#666" stroke-width="1.500"/></svg></button>
    <span class="t-sep"></span>
    <button class="t-btn" aria-label="عرض ستون"><svg width="18" height="12"><path d="M0 6l6-5v4h6V1l6 5-6 5V7H6v4z" fill="#6fa7e6" stroke="#2e6cb8" stroke-width=".8"/></svg></button>
    <button class="t-btn" aria-label="چيدمان"><svg width="18" height="19"><path d="M0 0h5v19H0z" fill="#2fc52c"/><path d="M6 0h4v19H6z" fill="#e6f4ea"/><path d="M11 0h3v19h-3zM15 0h3v19h-3z" fill="#f4f8ff"/><path d="M5.500 0v19M10.500 0v19M14.500 0v19M17.500 0v19" stroke="#7e94bd"/></svg></button>
    <button class="t-drop" aria-label="گزينه چيدمان"><svg width="7" height="5"><use href="#drop"/></svg></button>
    <span class="t-sep"></span>
    <button class="t-btn" aria-label="چاپ"><svg width="20" height="20"><path d="M5 1h10v8H5z" fill="#fff" stroke="#6a727d"/><path d="M1 7h18v9H1z" fill="#8f98a6" stroke="#465062"/><path d="M1 8h18v2H1z" fill="#d9dee5"/><path d="M5 13h10v6H5z" fill="#eaf3fc" stroke="#5a6574"/><path d="M7 16h6" stroke="#5b95d4" stroke-width="2"/></svg></button>
    <button class="t-drop" aria-label="گزينه چاپ"><svg width="7" height="5"><use href="#drop"/></svg></button>
    <button class="t-btn" aria-label="خروجي اکسل"><svg width="18" height="18"><path d="M1 1h16v16H1z" fill="#eef7ea" stroke="#3c7d36" stroke-width="2"/><path d="M4 4l9 10M13 4L4 14" stroke="#2f8b2b" stroke-width="3"/></svg></button>
    <button class="t-btn" aria-label="ارسال"><svg width="19" height="17"><path d="M0 6l8-5 8 7-7 8z" fill="#fdfdfd" stroke="#b5b5a8"/><path d="M8 4h10v8l-3-2-5 5-2-3 4-4z" fill="#6aa84f" stroke="#356f27" stroke-width=".7"/></svg></button>
    <button class="t-drop" aria-label="گزينه ارسال"><svg width="7" height="5"><use href="#drop"/></svg></button>
    <span class="t-sep"></span>
    <button class="t-btn" aria-label="زبان"><svg width="18" height="18"><circle cx="9" cy="9" r="8" fill="#a9b1be" stroke="#68727f" stroke-width="1.500"/><path d="M2 8a7 7 0 0 1 14 0z" fill="#d3d8e0"/><path d="M1 9h16" stroke="#68727f"/></svg></button>
    <button class="t-drop" aria-label="گزينه زبان"><svg width="7" height="5"><use href="#drop"/></svg></button>
   </div>
  </div>
 </section>
</main>
<div class="deskbar d-flex align-items-center justify-content-end"><button class="desk">ميز كار</button></div>
<footer class="status d-flex align-items-center">
 <div class="s-user">نام كاربر :سرپرست</div>
 <div class="s-cur d-flex"><span>ارز پايه :</span><span>ريال</span></div>
 <label class="s-year" for="fy">سال مالي:</label>
 <div class="year-wrap"><select id="fy" class="year-pick"><option>1403</option></select><svg width="7" height="5"><use href="#drop"/></svg></div>
 <div class="s-day d-flex"><span>امروز :</span><span class="lat">1404/03/18</span></div>
 <div class="s-cust d-flex"><span>كد مشتري:</span><span class="lat">1111110</span></div>
 <div class="s-ver d-flex flex-fill"><span>نسخه:</span><span class="lat">6.0.7</span></div>
 <a class="help-link" href="#">پشتيباني و آموزش</a>
 <div class="trays d-flex align-items-center">
  <svg width="19" height="22"><path d="M1 4v14c0 4 17 4 17 0V4z" fill="#9aa3ad"/><path d="M4 5h5v15H4z" fill="#dfe4ea"/><ellipse cx="9.500" cy="4" rx="8.500" ry="3" fill="#d8dde3" stroke="#6f7884"/><path d="M1 9c3 3 14 3 17 0M1 14c3 3 14 3 17 0" fill="none" stroke="#5a6470"/></svg>
  <svg width="19" height="21"><path d="M10 2c6 0 6 7 6 10l3 5H1l3-5c0-4 0-10 6-10z" fill="#f7c21c" stroke="#d79a0c" stroke-width=".8"/><path d="M7 18h5l-2 2z" fill="#a06a08"/><circle cx="5" cy="5" r="4.500" fill="#f00"/></svg>
 </div>
</footer>
</body>
</html>
